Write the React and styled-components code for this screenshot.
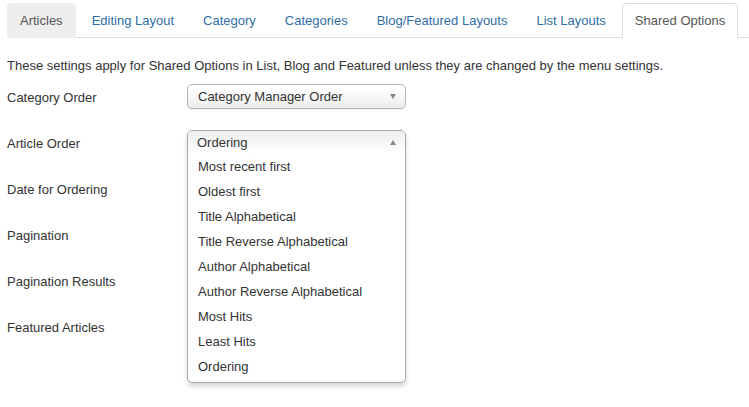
import React from 'react';
import styled, { createGlobalStyle } from 'styled-components';

const GlobalStyle = createGlobalStyle`
    body {
        margin: 0;
        background: #ffffff;
        font-family: "Liberation Sans", Arial, sans-serif;
        font-size: 13px;
        color: #333333;
    }
`;

const Page = styled.div`
    box-sizing: border-box;
    min-height: 407px;
    padding: 3px 0 0 7px;
`;

const Tabs = styled.ul`
    display: flex;
    margin: 0;
    padding: 0;
    list-style: none;
    border-bottom: 1px solid #dddddd;
`;

const Tab = styled.li`
    height: 33px;
    line-height: 33px;
    padding: 0 12px;
    margin-right: 3px;
    margin-bottom: -1px;
    border: 1px solid ${props => props.active ? '#dddddd' : 'transparent'};
    border-bottom-color: ${props => props.active ? '#ffffff' : 'transparent'};
    border-radius: 4px 4px 0 0;
    background: ${props => props.active ? '#ffffff' : props.hover ? '#eeeeee' : 'transparent'};
    color: ${props => props.active || props.hover ? '#555555' : '#2f6ea5'};
    white-space: nowrap;
`;

const Intro = styled.p`
    margin: 19px 0 9px;
    line-height: 18px;
`;

const Row = styled.div`
    display: flex;
    align-items: center;
    height: 25px;
    margin-bottom: 21px;
`;

const Label = styled.div`
    width: 180px;
    flex-shrink: 0;
    padding-top: 2px;
`;

const Field = styled.div`
    position: relative;
    width: 219px;
    height: 25px;
`;

const Select = styled.div`
    display: flex;
    align-items: center;
    justify-content: space-between;
    box-sizing: border-box;
    height: 25px;
    padding: 0 9px 0 10px;
    border: 1px solid #b4b4b4;
    border-radius: 5px;
    background: linear-gradient(#ffffff 20%, #ececec);
    box-shadow: 0 1px 1px rgba(0, 0, 0, 0.06);
`;

const Arrow = styled.span`
    width: 0;
    height: 0;
    border-left: 3.5px solid transparent;
    border-right: 3.5px solid transparent;
    ${props => props.up
        ? 'border-bottom: 5px solid #888888;'
        : 'border-top: 5px solid #888888;'}
`;

const Dropdown = styled.div`
    position: absolute;
    top: 0;
    left: 0;
    right: 0;
    z-index: 2;
    box-sizing: border-box;
    background: #ffffff;
    border: 1px solid #aaaaaa;
    border-radius: 5px;
    box-shadow: 0 4px 5px rgba(0, 0, 0, 0.15);
    padding-bottom: 3px;
`;

const DropHead = styled.div`
    display: flex;
    align-items: center;
    justify-content: space-between;
    height: 23px;
    padding: 0 9px 0 9px;
    border-radius: 4px 4px 0 0;
    background: linear-gradient(#eeeeee, #ffffff);
`;

const Option = styled.div`
    height: 25px;
    line-height: 25px;
    padding-left: 10px;
    white-space: nowrap;
`;

const tabs = ['Articles', 'Editing Layout', 'Category', 'Categories', 'Blog/Featured Layouts', 'List Layouts', 'Shared Options'];

const orderOptions = [
    'Most recent first',
    'Oldest first',
    'Title Alphabetical',
    'Title Reverse Alphabetical',
    'Author Alphabetical',
    'Author Reverse Alphabetical',
    'Most Hits',
    'Least Hits',
    'Ordering',
];

const App = () => {
    return (
        <Page>
            <GlobalStyle />
            <Tabs>
                {tabs.map((tab, i) => (
                    <Tab key={tab} hover={i === 0} active={tab === 'Shared Options'}>{tab}</Tab>
                ))}
            </Tabs>
            <Intro>These settings apply for Shared Options in List, Blog and Featured unless they are changed by the menu settings.</Intro>
            <Row>
                <Label>Category Order</Label>
                <Field>
                    <Select>Category Manager Order<Arrow /></Select>
                </Field>
            </Row>
            <Row>
                <Label>Article Order</Label>
                <Field>
                    <Dropdown>
                        <DropHead>Ordering<Arrow up /></DropHead>
                        {orderOptions.map(option => <Option key={option}>{option}</Option>)}
                    </Dropdown>
                </Field>
            </Row>
            <Row><Label>Date for Ordering</Label></Row>
            <Row><Label>Pagination</Label></Row>
            <Row><Label>Pagination Results</Label></Row>
            <Row><Label>Featured Articles</Label></Row>
        </Page>
    );
};

export default App;
